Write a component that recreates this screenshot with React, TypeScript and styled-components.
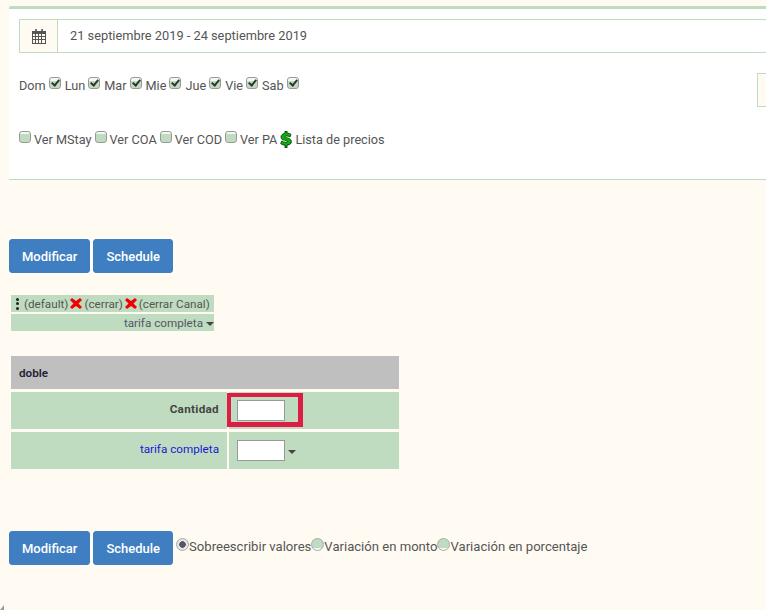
import React from 'react'
import styled, { createGlobalStyle } from 'styled-components'

const GlobalStyle = createGlobalStyle`
  html, body {
    margin: 0;
    height: 100%;
    overflow: hidden;
    background: #fffbf2;
  }
  body {
    font-family: Roboto, "Noto Sans", sans-serif;
    font-size: 13px;
    color: #555;
  }
`

const days = ['Dom', 'Lun', 'Mar', 'Mie', 'Jue', 'Vie', 'Sab']
const views = ['Ver MStay', 'Ver COA', 'Ver COD', 'Ver PA']

const CalendarIcon = () => (
  <svg width="14" height="15" viewBox="0 0 14 15">
    <path d="M3 0h2v3H3zM9 0h2v3H9z" fill="#6b7b73" />
    <path
      fillRule="evenodd"
      d="M0 2h14v13H0zM1 5v2h2V5zm3 0v2h2V5zm3 0v2h2V5zm3 0v2h3V5zM1 8v2h2V8zm3 0v2h2V8zm3 0v2h2V8zm3 0v2h3V8zM1 11v3h2v-3zm3 0v3h2v-3zm3 0v3h2v-3zm3 0v3h3v-3z"
      fill="#555"
    />
  </svg>
)

const CloseIcon = () => (
  <svg width="12" height="11" viewBox="0 0 12 11">
    <path d="M0 2 2 0l4 3 4-3 2 2-3.500 3.500L12 9l-2 2-4-3-4 3-2-2 3.500-3.500z" fill="#f00000" />
  </svg>
)

const MoneyIcon = () => (
  <svg width="12" height="17" viewBox="0 0 12 17">
    <path
      d="M5 0h2v2c2 .2 3.400.8 4 1.400L10 6C9 5.300 7.800 5 6.500 5c-1 0-1.300.3-1.300.7 0 .5.800.7 2.300 1.200 2.600.8 3.900 1.800 3.900 3.800 0 1.900-1.500 3.200-4.400 3.500V17H5v-2.800c-1.800-.1-3.500-.8-4.300-1.500l1.100-2.800c1 .8 2.600 1.400 4 1.400 1 0 1.500-.3 1.500-.8 0-.6-.9-.8-2.400-1.300C2.500 8.900 1 8 1 6c0-1.900 1.500-3.300 4-3.800z"
      fill="#0cb00c"
      stroke="#032803"
      strokeWidth="0.8"
    />
  </svg>
)

const App: React.FC = () => (
  <Page>
    <GlobalStyle />
    <Panel>
      <DateGroup>
        <DateAddon>
          <CalendarIcon />
        </DateAddon>
        <DateValue>21 septiembre 2019 - 24 septiembre 2019</DateValue>
      </DateGroup>
      <DaysRow>
        {days.map((day) => (
          <Option key={day}>
            {day} <Check $checked />
          </Option>
        ))}
        <SideBox />
      </DaysRow>
      <ViewsRow>
        {views.map((view) => (
          <Option key={view}>
            <Check /> {view}
          </Option>
        ))}
        <Option>
          <MoneyIcon /> Lista de precios
        </Option>
      </ViewsRow>
    </Panel>

    <Actions>
      <ActionButton>Modificar</ActionButton>
      <ActionButton>Schedule</ActionButton>
    </Actions>

    <TabBlock>
      <TabRow>
        <Dots>
          <i />
          <i />
          <i />
        </Dots>
        <span>(default)</span>
        <CloseIcon />
        <span>(cerrar)</span>
        <CloseIcon />
        <span>(cerrar Canal)</span>
      </TabRow>
      <TariffRow>
        tarifa completa <Caret />
      </TariffRow>
    </TabBlock>

    <RatesTable>
      <thead>
        <tr>
          <HeadCell colSpan={2}>doble</HeadCell>
        </tr>
      </thead>
      <tbody>
        <tr>
          <LabelCell>
            <QtyLabel>Cantidad</QtyLabel>
          </LabelCell>
          <InputCell>
            <RateInput />
            <Highlight />
          </InputCell>
        </tr>
        <tr>
          <LabelCell>
            <TariffLink>tarifa completa</TariffLink>
          </LabelCell>
          <InputCell>
            <RateInput />
            <CellCaret />
          </InputCell>
        </tr>
      </tbody>
    </RatesTable>

    <BottomBar>
      <ActionButton>Modificar</ActionButton>
      <ActionButton>Schedule</ActionButton>
      <Modes>
        <Radio $checked />
        <span>Sobreescribir valores</span>
        <Radio />
        <span>Variación en monto</span>
        <Radio />
        <span>Variación en porcentaje</span>
      </Modes>
    </BottomBar>
    <ScrollArrow />
  </Page>
)

const Page = styled.div`
  padding: 6px 0 0 9px;
  width: 757px;
  height: 604px;
  overflow: hidden;
`

const Panel = styled.div`
  width: 800px;
  height: 150px;
  padding: 10px;
  background: #fff;
  border-top: 3px solid #c0dcc0;
  border-bottom: 1px solid #c0dcc0;
  border-top-left-radius: 2px;
`

const DateGroup = styled.div`
  display: flex;
  height: 34px;
  box-sizing: border-box;
  border: 1px solid #c0dcc0;
`

const DateAddon = styled.div`
  width: 37px;
  flex: none;
  display: flex;
  align-items: center;
  justify-content: center;
  background: #fffbf2;
  border-right: 1px solid #c0dcc0;
`

const DateValue = styled.div`
  padding-left: 12px;
  line-height: 32px;
  font-size: 12.800px;
`

const DaysRow = styled.div`
  position: relative;
  display: flex;
  gap: 4px;
  margin-top: 23px;
  height: 18px;
  align-items: center;
`

const SideBox = styled.div`
  position: absolute;
  left: 738px;
  top: -3px;
  width: 60px;
  height: 34px;
  box-sizing: border-box;
  background: #fffbf2;
  border: 1px solid #c0dcc0;
`

const ViewsRow = styled.div`
  display: flex;
  gap: 3px;
  margin-top: 36px;
  height: 18px;
  align-items: center;
`

const Option = styled.label`
  display: inline-flex;
  align-items: center;
  gap: 3px;
  white-space: nowrap;
  font-size: 12.700px;
`

const Check = styled.span<{ $checked?: boolean }>`
  position: relative;
  top: -2px;
  width: 12px;
  height: 12px;
  box-sizing: border-box;
  border: 1px solid #999;
  border-radius: 3px;
  background: linear-gradient(#f4f8f4 0, #f4f8f4 25%, #c0dcc0 25%);

  ${(p) =>
    p.$checked &&
    `
    &::after {
      content: '';
      position: absolute;
      left: 3px;
      top: 0;
      width: 3px;
      height: 6px;
      border: solid #333;
      border-width: 0 2px 2px 0;
      transform: rotate(40deg);
    }
  `}
`

const Actions = styled.div`
  display: flex;
  gap: 3px;
  margin-top: 59px;
`

const ActionButton = styled.button`
  height: 34px;
  padding: 0 12px;
  border: 1px solid #3f7fc1;
  border-radius: 3px;
  background: #3f7fc1;
  color: #fff;
  font-family: inherit;
  font-size: 13px;
  font-weight: 500;
`

const TabBlock = styled.div`
  width: 203px;
  margin: 22px 0 0 2px;
  font-size: 11.700px;
`

const TabRow = styled.div`
  display: flex;
  align-items: center;
  gap: 2px;
  height: 17px;
  white-space: nowrap;
  background: #c0dcc0;
`

const Dots = styled.span`
  display: flex;
  flex-direction: column;
  gap: 1.500px;
  padding: 0 3px 0 5px;

  i {
    display: block;
    width: 3px;
    height: 3px;
    border-radius: 50%;
    background: #222;
  }
`

const TariffRow = styled.div`
  display: flex;
  align-items: center;
  justify-content: flex-end;
  gap: 3px;
  height: 17px;
  margin-top: 2px;
  background: #c0dcc0;
  color: #556;
`

const Caret = styled.span`
  width: 0;
  height: 0;
  margin-top: 2px;
  border: 4px solid transparent;
  border-top-color: #444;
  border-bottom: 0;
`

const CellCaret = styled(Caret)`
  display: inline-block;
  margin-left: 3px;
`

const RatesTable = styled.table`
  width: 392px;
  margin: 22px 0 0 0;
  border-collapse: separate;
  border-spacing: 2px 3px;
  font-size: 11.700px;
`

const HeadCell = styled.th`
  height: 33px;
  padding: 0 0 0 8px;
  text-align: left;
  background: #bfbfbf;
  color: #223;
  font-weight: 600;
`

const LabelCell = styled.td`
  width: 216px;
  height: 37px;
  padding: 0 8px 4px 0;
  box-sizing: border-box;
  text-align: right;
  background: #c0dcc0;
  color: #444;
`

const QtyLabel = styled.strong`
  letter-spacing: 0.300px;
`

const InputCell = styled.td`
  position: relative;
  padding: 0;
  background: #c0dcc0;
`

const Highlight = styled.span`
  position: absolute;
  left: -2px;
  top: 1px;
  width: 76px;
  height: 34px;
  box-sizing: border-box;
  border: solid #dc1e45;
  border-width: 4px 5px 5px 4px;
`

const RateInput = styled.input`
  width: 48px;
  height: 21px;
  box-sizing: border-box;
  margin-left: 8px;
  padding: 0;
  border: 1px solid #999;
  background: #fff;
  vertical-align: middle;
`

const TariffLink = styled.a`
  color: #1a1ad6;
`

const BottomBar = styled.div`
  display: flex;
  gap: 3px;
  margin-top: 59px;
`

const Modes = styled.div`
  display: flex;
  align-items: center;
  height: 30px;
  font-size: 13.100px;
  white-space: nowrap;
`

const Radio = styled.span<{ $checked?: boolean }>`
  width: 13px;
  height: 13px;
  box-sizing: border-box;
  border: 1px solid #aaa;
  border-radius: 50%;
  margin-top: -3px;
  background: ${(p) =>
    p.$checked
      ? 'radial-gradient(circle, #556 0, #556 3px, #dfe9df 3.500px)'
      : 'linear-gradient(#c0dcc0 0, #c0dcc0 80%, #f4f8f4 80%)'};
`

const ScrollArrow = styled.span`
  position: absolute;
  left: 0;
  bottom: 0;
  width: 0;
  height: 0;
  border-style: solid;
  border-width: 0 0 5px 4px;
  border-color: transparent transparent #999 transparent;
`

export default App
